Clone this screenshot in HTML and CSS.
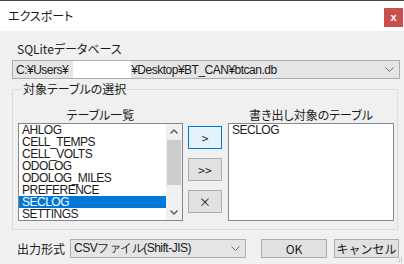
FILE: index.html
```html
<!DOCTYPE html>
<html lang="ja">
<head>
    <meta charset="UTF-8">
    <meta name="viewport" content="width=device-width, initial-scale=1.0">
    <title>エクスポート</title>
    <link rel="stylesheet" href="styles.css">
</head>
<body>
<div class="window">
    <div class="titlebar">
        <span class="title">エクスポート</span>
        <span class="close">x</span>
    </div>
    <div class="content">
        <div class="label">SQLiteデータベース</div>
        <div class="combo wide">
            <span class="mono">C:¥Users¥</span><span class="redact"></span><span class="mono">¥Desktop¥BT_CAN¥btcan.db</span>
            <svg class="chevron" width="9" height="5" viewBox="0 0 9 5"><path d="M0.5 0.5 L4.5 4.5 L8.5 0.5" fill="none" stroke="#707070" stroke-width="1"/></svg>
        </div>

        <fieldset class="group">
            <legend>対象テーブルの選択</legend>
            <div class="lists">
                <div class="col left">
                    <div class="caption">テーブル一覧</div>
                    <div class="listbox">
                        <ul class="items">
                            <li>AHLOG</li>
                            <li>CELL_TEMPS</li>
                            <li>CELL_VOLTS</li>
                            <li>ODOLOG</li>
                            <li>ODOLOG_MILES</li>
                            <li>PREFERENCE</li>
                            <li class="selected">SECLOG</li>
                            <li>SETTINGS</li>
                        </ul>
                        <div class="scrollbar">
                            <svg class="arrow" width="16" height="16" viewBox="0 0 16 16"><path d="M4.5 9.5 L8 6 L11.5 9.5" fill="none" stroke="#606060" stroke-width="1.5"/></svg>
                            <div class="track"><div class="thumb"></div></div>
                            <svg class="arrow" width="16" height="16" viewBox="0 0 16 16"><path d="M4.5 6.5 L8 10 L11.5 6.5" fill="none" stroke="#606060" stroke-width="1.5"/></svg>
                        </div>
                    </div>
                </div>
                <div class="movers">
                    <button class="btn focus">&gt;</button>
                    <button class="btn">&gt;&gt;</button>
                    <button class="btn">×</button>
                </div>
                <div class="col right">
                    <div class="caption">書き出し対象のテーブル</div>
                    <div class="listbox">
                        <ul class="items">
                            <li>SECLOG</li>
                        </ul>
                    </div>
                </div>
            </div>
        </fieldset>

        <div class="bottom">
            <span class="fmt-label">出力形式</span>
            <div class="combo fmt">
                <span>CSVファイル(Shift-JIS)</span>
                <svg class="chevron" width="9" height="5" viewBox="0 0 9 5"><path d="M0.5 0.5 L4.5 4.5 L8.5 0.5" fill="none" stroke="#707070" stroke-width="1"/></svg>
            </div>
            <button class="btn ok">OK</button>
            <button class="btn cancel">キャンセル</button>
        </div>
    </div>
    <svg class="grip" width="7" height="7" viewBox="0 0 7 7">
        <rect x="5" y="1" width="1" height="1" fill="#b0b0b0"/>
        <rect x="3" y="3" width="1" height="1" fill="#b0b0b0"/>
        <rect x="5" y="3" width="1" height="1" fill="#b0b0b0"/>
        <rect x="1" y="5" width="1" height="1" fill="#b0b0b0"/>
        <rect x="3" y="5" width="1" height="1" fill="#b0b0b0"/>
        <rect x="5" y="5" width="1" height="1" fill="#b0b0b0"/>
    </svg>
</div>
</body>
</html>
```

FILE: styles.css
```css
* { box-sizing: border-box; }
body { margin: 0; background: #f0f0f0; font-family: "Noto Sans CJK JP", sans-serif; font-size: 12px; color: #1a1a1a; font-feature-settings: "palt"; }

.window { position: relative; width: 404px; height: 264px; border-top: 1px solid #4a4a4a; overflow: hidden; }
.titlebar { height: 30px; background: #fff; display: flex; justify-content: space-between; align-items: flex-start; }
.title { margin: 7px 0 0 8px; line-height: 16px; }
.close { width: 19px; height: 19px; margin: 7px 1px 0 0; background: #c94f4f; color: #fff; font: bold 11px/18px "Liberation Sans", sans-serif; text-align: center; }

.content { padding: 9px 4px 0 12px; }
.label { padding-left: 5px; line-height: 18px; height: 18px; }

.mono, .items, .fmt span:first-child { font-family: "Liberation Sans", sans-serif; font-size: 12px; letter-spacing: -0.5px; }

.combo { display: flex; align-items: center; height: 19px; border: 1px solid #adadad; background: #e5e5e5; padding-left: 3px; white-space: nowrap; }
.combo.wide { margin-top: 2px; }
.combo .chevron { margin-left: auto; margin-right: 5px; }
.redact { align-self: stretch; width: 58px; margin-left: 5px; background: #fff; }

.group { width: 386px; margin: 2px 0 0; padding: 9px 3px 8px 5px; border: 1px solid #dcdcdc; }
.group legend { padding: 0 1px; margin-left: 4px; line-height: 16px; }

.lists { display: flex; }
.col.left { width: 165px; }
.col.right { width: 166px; }
.caption { text-align: center; line-height: 17px; height: 17px; }
.listbox { display: flex; height: 98px; border: 1px solid #828790; background: #fff; }
.items { flex: 1; list-style: none; margin: 0; padding: 0; line-height: 12px; }
.items li { padding-left: 3px; height: 12px; white-space: nowrap; }
.items li.selected { background: #0078d7; color: #fff; }

.scrollbar { width: 16px; display: flex; flex-direction: column; background: #f0f0f0; }
.track { flex: 1; }
.thumb { height: 45px; margin: 0 1px; background: #cdcdcd; }

.movers { display: flex; flex-direction: column; gap: 9px; margin: 20px 6px 0 5px; }
.btn { height: 23px; width: 34px; padding: 0; border: 1px solid #adadad; background: #e1e1e1; font: 12px "Noto Sans CJK JP", sans-serif; color: #1a1a1a; }
.btn.focus { border-color: #0078d7; background: #e5f1fb; }

.bottom { display: flex; align-items: center; margin-top: 9px; height: 19px; }
.fmt-label { width: 58px; padding-left: 5px; }
.combo.fmt { width: 176px; padding-left: 3px; }
.bottom .btn { height: 19px; line-height: 17px; }
.btn.ok { width: 66px; margin-left: 15px; }
.btn.cancel { width: 65px; margin-left: 7px; }

.grip { position: absolute; right: 1px; bottom: 1px; }
```
